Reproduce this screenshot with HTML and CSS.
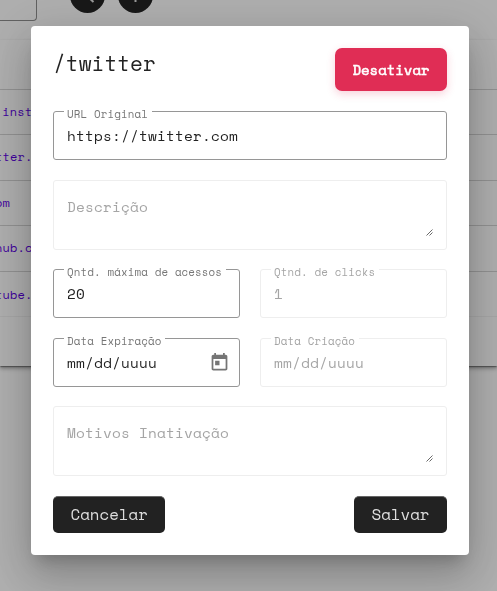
FILE: index.html
```html
<!DOCTYPE html>
<html lang="pt-BR">
<head>
<meta charset="utf-8">
<title>Links</title>
<link rel="stylesheet" href="styles.css">
</head>
<body>
<div class="page">
  <header class="toolbar">
    <div class="search"></div>
    <div class="round"><svg width="35" height="35" viewBox="0 0 35 35"><path d="M17.500 18.500l6 5.500" stroke="#ddd" stroke-width="2"/></svg></div>
    <div class="round"><svg width="35" height="35" viewBox="0 0 35 35"><path d="M17.500 12v12" stroke="#ddd" stroke-width="2"/></svg></div>
  </header>
  <main class="table">
    <div class="table-head"></div>
    <a class="row first">instagram.com</a>
    <a class="row">tter.com</a>
    <a class="row">om</a>
    <a class="row">hub.com</a>
    <a class="row">tube.com</a>
    <div class="pagination"></div>
  </main>
</div>
<div class="backdrop">
  <section class="dialog">
    <div class="dialog-head">
      <h1>/twitter</h1>
      <button class="danger">Desativar</button>
    </div>
    <fieldset class="field"><legend><span>URL Original</span></legend><div class="value">https://twitter.com</div></fieldset>
    <div class="area"><span>Descrição</span><svg class="grip" width="7" height="7" viewBox="0 0 7 7"><path d="M0.500 6.500l6-6M3.500 6.500l3-3"/></svg></div>
    <div class="columns">
      <fieldset class="field"><legend><span>Qntd. máxima de acessos</span></legend><div class="value">20</div></fieldset>
      <fieldset class="field disabled"><legend><span>Qtnd. de clicks</span></legend><div class="value">1</div></fieldset>
    </div>
    <div class="columns">
      <fieldset class="field"><legend><span>Data Expiração</span></legend><div class="value"><span>mm/dd/uuuu</span><svg class="calendar" width="21" height="21" viewBox="0 0 24 24"><path d="M19 3h-1V1h-2v2H8V1H6v2H5c-1.100 0-2 .9-2 2v14c0 1.100.9 2 2 2h14c1.100 0 2-.9 2-2V5c0-1.100-.9-2-2-2zm0 16H5V8h14v11zM7 10h5v5H7z"/></svg></div></fieldset>
      <fieldset class="field disabled"><legend><span>Data Criação</span></legend><div class="value">mm/dd/uuuu</div></fieldset>
    </div>
    <div class="area last"><span>Motivos Inativação</span><svg class="grip" width="7" height="7" viewBox="0 0 7 7"><path d="M0.500 6.500l6-6M3.500 6.500l3-3"/></svg></div>
    <div class="actions"><button class="dark">Cancelar</button><button class="dark">Salvar</button></div>
  </section>
</div>
</body>
</html>
```
FILE: styles.css
```css
* { box-sizing: border-box; }
html, body { margin: 0; height: 100%; overflow: hidden; }
body { font-family: "Space Mono", "Liberation Mono", monospace; background: #fafafa; color: #222; }
button { font-family: inherit; border: 0; padding: 0; }
.toolbar { display: flex; align-items: flex-end; height: 21px; }
.search { width: 37px; height: 21px; border: solid #8b8b8b; border-width: 0 1px 1px 0; border-bottom-right-radius: 4px; margin-right: 33px; }
.round { width: 35px; height: 35px; border-radius: 50%; background: #222; margin: 0 13px 8px 0; flex: none; }
.round svg { display: block; }
.table { margin-top: 19px; background: #fafafa; box-shadow: 0 2px 1px -1px rgba(0,0,0,.2), 0 1px 1px rgba(0,0,0,.14), 0 1px 3px rgba(0,0,0,.12), 0 3px 4px rgba(0,0,0,.25); height: 326px; }
.table-head { height: 50px; border-bottom: 1px solid #d0d0d0; }
.row { display: block; height: 45.500px; border-bottom: 1px solid #d0d0d0; line-height: 44px; font-size: 12px; letter-spacing: .15px; color: #5a00e0; text-indent: -5px; white-space: nowrap; }
.row.first { height: 45px; text-indent: 2.300px; }
.row:nth-last-child(2) { border-color: #eee; line-height: 46px; }
.backdrop { position: fixed; inset: 0; background: rgba(0,0,0,.3); padding: 26px 28px 0 31px; }
.dialog { width: 438px; height: 529px; padding: 22px; background: #fff; border-radius: 4px; box-shadow: 0 11px 15px -7px rgba(0,0,0,.2), 0 24px 38px 3px rgba(0,0,0,.14), 0 9px 46px 8px rgba(0,0,0,.12); }
.dialog-head { display: flex; justify-content: space-between; height: 57px; }
h1 { margin: 2px 0 0; font-size: 21px; line-height: 26px; font-weight: 400; }
.danger { width: 112px; height: 43px; border-radius: 7px; background: #e02d55; color: #fff; font-size: 14px; font-weight: 400; -webkit-text-stroke: .6px #fff; box-shadow: 0 3px 8px rgba(224,45,85,.22); }
.field { display: block; height: 55px; min-width: 0; margin: 0 0 20px; padding: 0 10px; border: 1px solid #969696; border-radius: 3px; }
.field legend { padding: 0 4px 0 3px; font-size: 10.800px; line-height: 13px; letter-spacing: .135px; color: #777; white-space: nowrap; }
.field legend span { display: block; transform: translateY(3px); }
.value { display: flex; align-items: center; justify-content: space-between; height: 27px; margin-top: 4px; padding: 0 0 0 3px; font-size: 14.400px; line-height: 20px; letter-spacing: .19px; }
.calendar { fill: #757575; margin: 0 -1px 0 0; }
.disabled { border-color: #eee; }
.disabled legend, .disabled .value { color: #a5a5a5; }
.area { display: flex; justify-content: space-between; align-items: flex-end; height: 70px; margin-bottom: 13px; padding: 16px 13px 13px 13px; border: 1px solid #eee; border-radius: 3px; color: #a5a5a5; font-size: 14.400px; line-height: 20px; letter-spacing: .19px; }
.area span { align-self: flex-start; }
.area.last { margin-bottom: 20px; }
.grip { fill: none; stroke: #444; stroke-width: .8; }
.columns { display: grid; grid-template-columns: 1fr 1fr; gap: 20px; height: 69px; }
.columns .field { margin: 0; }
.columns + .area { margin-top: 5px; }
.actions { display: flex; justify-content: space-between; }
.dark { height: 37px; padding: 0 17.500px 2px; border: 1px solid #666; border-width: 1px 0 0; border-radius: 5px; background: #222; color: #ddd; font-size: 15.800px; }
```
